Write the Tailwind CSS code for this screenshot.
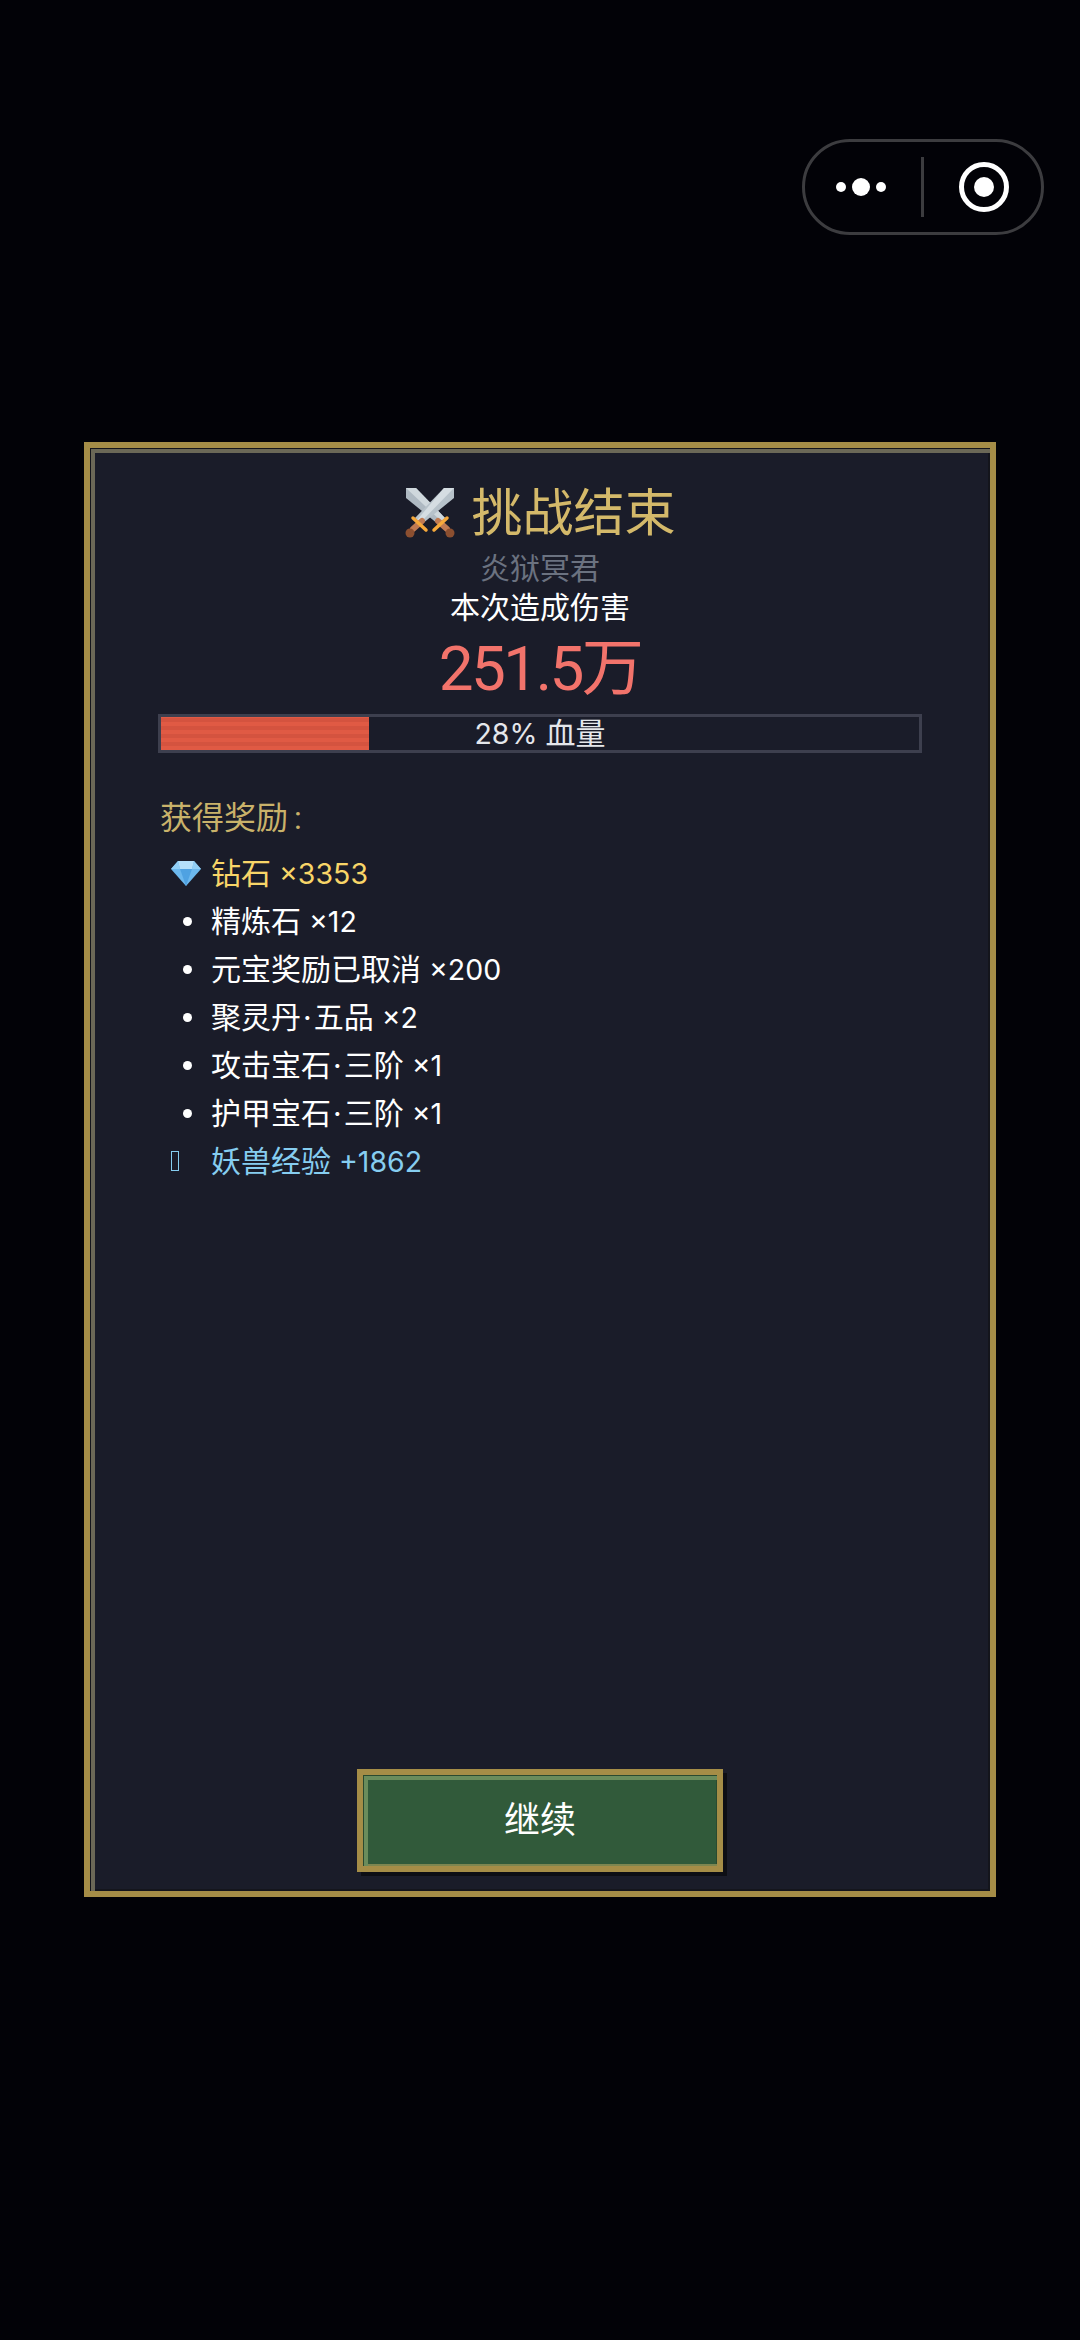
<!DOCTYPE html>
<html lang="zh"><head><meta charset="utf-8"><script src="https://cdn.jsdelivr.net/npm/@tailwindcss/browser@4"></script></head>
<body class="m-0 bg-[#020207]">
<div class="relative w-[1080px] h-[2340px] pt-[442px] pl-[84px] bg-[#020207] font-['Inter','Noto_Sans_CJK_SC',sans-serif]">
  <div class="absolute left-[802px] top-[139px] w-[242px] h-[96px] rounded-[48px] border-[3px] border-[#3c3c3f] flex items-center">
    <div class="flex items-center gap-[6px] ml-[31px]">
      <span class="w-[10px] h-[10px] rounded-full bg-white"></span><span class="w-[18px] h-[18px] rounded-full bg-white"></span><span class="w-[10px] h-[10px] rounded-full bg-white"></span>
    </div>
    <span class="ml-[35px] w-[3px] h-[60px] bg-[#3c3c3f]"></span>
    <svg class="ml-[34px]" width="52" height="52" viewBox="0 0 52 52"><circle cx="26" cy="26" r="22.5" fill="none" stroke="#fff" stroke-width="5"/><circle cx="26" cy="26" r="10" fill="#fff"/></svg>
  </div>

  <div class="w-[912px] h-[1455px] border-[6px] border-[#a58d47] bg-[#1a1c29] shadow-[inset_1px_1px_0_#14151c,inset_5px_5px_0_#6b6857,inset_-2px_-2px_0_#14151c] flex flex-col items-center">
    <div class="mt-[36px] h-[58px] flex items-center gap-[15px]">
      <svg width="52" height="50" viewBox="0 0 52 50">
        <polygon points="2,0 12,0 41,30 34,36 2,10" fill="#aeb9c2"/>
        <polygon points="2,0 12,0 41,30 37,33" fill="#cfd8dd"/>
        <polygon points="50,0 40,0 11,30 18,36 50,10" fill="#b7c2ca"/>
        <polygon points="50,0 40,0 13,32 16,35" fill="#d5dde2"/>
        <path d="M9 41 L18 33 M34 33 L43 41" stroke="#c07a52" stroke-width="6" stroke-linecap="round"/>
        <circle cx="6" cy="45" r="4.5" fill="#8c4f30"/><circle cx="46" cy="45" r="4.5" fill="#8c4f30"/>
        <path d="M9 30 L22 42 M43 30 L30 42" stroke="#f6a93b" stroke-width="3.5" stroke-linecap="round"/>
      </svg>
      <span class="text-[51px] leading-[58px] text-[#d4b96a]">挑战结束</span>
    </div>
    <div class="mt-[6px] text-[30px] leading-[40px] text-[#6b7280]">炎狱冥君</div>
    <div class="text-[30px] leading-[38px] text-white">本次造成伤害</div>
    <div class="mt-[5px] mb-[-1px] text-[62px] leading-[76px] text-[#f2736b] font-['Roboto','Noto_Sans_CJK_SC',sans-serif] tracking-[-2.5px]">251.5万</div>
    <div class="relative mt-[8px] w-[764px] h-[39px] border-[3px] border-[#3d3f4e] flex items-center justify-center">
      <div class="absolute left-0 top-0 h-full w-[208px] bg-[repeating-linear-gradient(0deg,#e05a44_0px,#e05a44_4px,#d4533f_4px,#d4533f_8px)]"></div>
      <span class="relative text-[30px] leading-[33px] text-[#e5e7eb]"><span class="text-[28.5px]">28% </span>血量</span>
    </div>
    <div class="w-[764px] mt-[44px] pl-[2px] text-[32px] leading-[42px] text-[#c9b26a]">获得奖励<span class="ml-[6px] font-['Roboto']">:</span></div>
    <ul class="w-[764px] mt-[10px] text-[30px] leading-[48px] text-white">
      <li class="h-[48px] flex items-center text-[#f8d568] whitespace-pre"><span class="w-[53px] flex justify-end pr-[10px]"><svg width="30" height="25" viewBox="0 0 30 25"><polygon points="7,0 23,0 30,8 15,25 0,8" fill="#6cb8ee"/><polygon points="7,0 23,0 21,8 9,8" fill="#b5e0fa"/><polygon points="9,8 21,8 15,25" fill="#4fa2e2"/><polygon points="0,8 9,8 7,0" fill="#92cff5"/><polygon points="30,8 21,8 23,0" fill="#92cff5"/></svg></span><span>钻石<span class="text-[28.5px]"> ×3353</span></span></li>
      <li class="h-[48px] flex items-center whitespace-pre"><span class="w-[53px] flex justify-center pl-[5px]"><span class="w-[9px] h-[9px] rounded-full bg-white"></span></span><span>精炼石<span class="text-[28.5px]"> ×12</span></span></li>
      <li class="h-[48px] flex items-center whitespace-pre"><span class="w-[53px] flex justify-center pl-[5px]"><span class="w-[9px] h-[9px] rounded-full bg-white"></span></span><span>元宝奖励已取消<span class="text-[28.5px]"> ×200</span></span></li>
      <li class="h-[48px] flex items-center whitespace-pre"><span class="w-[53px] flex justify-center pl-[5px]"><span class="w-[9px] h-[9px] rounded-full bg-white"></span></span><span>聚灵丹<span class="px-[2px]">·</span>五品<span class="text-[28.5px]"> ×2</span></span></li>
      <li class="h-[48px] flex items-center whitespace-pre"><span class="w-[53px] flex justify-center pl-[5px]"><span class="w-[9px] h-[9px] rounded-full bg-white"></span></span><span>攻击宝石<span class="px-[2px]">·</span>三阶<span class="text-[28.5px]"> ×1</span></span></li>
      <li class="h-[48px] flex items-center whitespace-pre"><span class="w-[53px] flex justify-center pl-[5px]"><span class="w-[9px] h-[9px] rounded-full bg-white"></span></span><span>护甲宝石<span class="px-[2px]">·</span>三阶<span class="text-[28.5px]"> ×1</span></span></li>
      <li class="h-[48px] flex items-center text-[#86cdf0] whitespace-pre"><span class="w-[53px] flex justify-start pl-[13px]"><span class="w-[8px] h-[20px] border border-[#86cdf0]"></span></span><span>妖兽经验<span class="text-[28.5px]"> +1862</span></span></li>
    </ul>
    <button class="mt-auto mb-[19px] pb-[2px] w-[366px] h-[103px] border-[6px] border-[#a58d47] bg-[#315a3a] text-[36px] text-white shadow-[inset_1px_1px_0_#2a4a30,inset_5px_5px_0_#6a8c5c,inset_0_-2px_0_#7d8650,inset_-1px_0_0_#2a4a30,4px_4px_0_rgba(0,0,0,0.5)]">继续</button>
  </div>
</div>
</body></html>
